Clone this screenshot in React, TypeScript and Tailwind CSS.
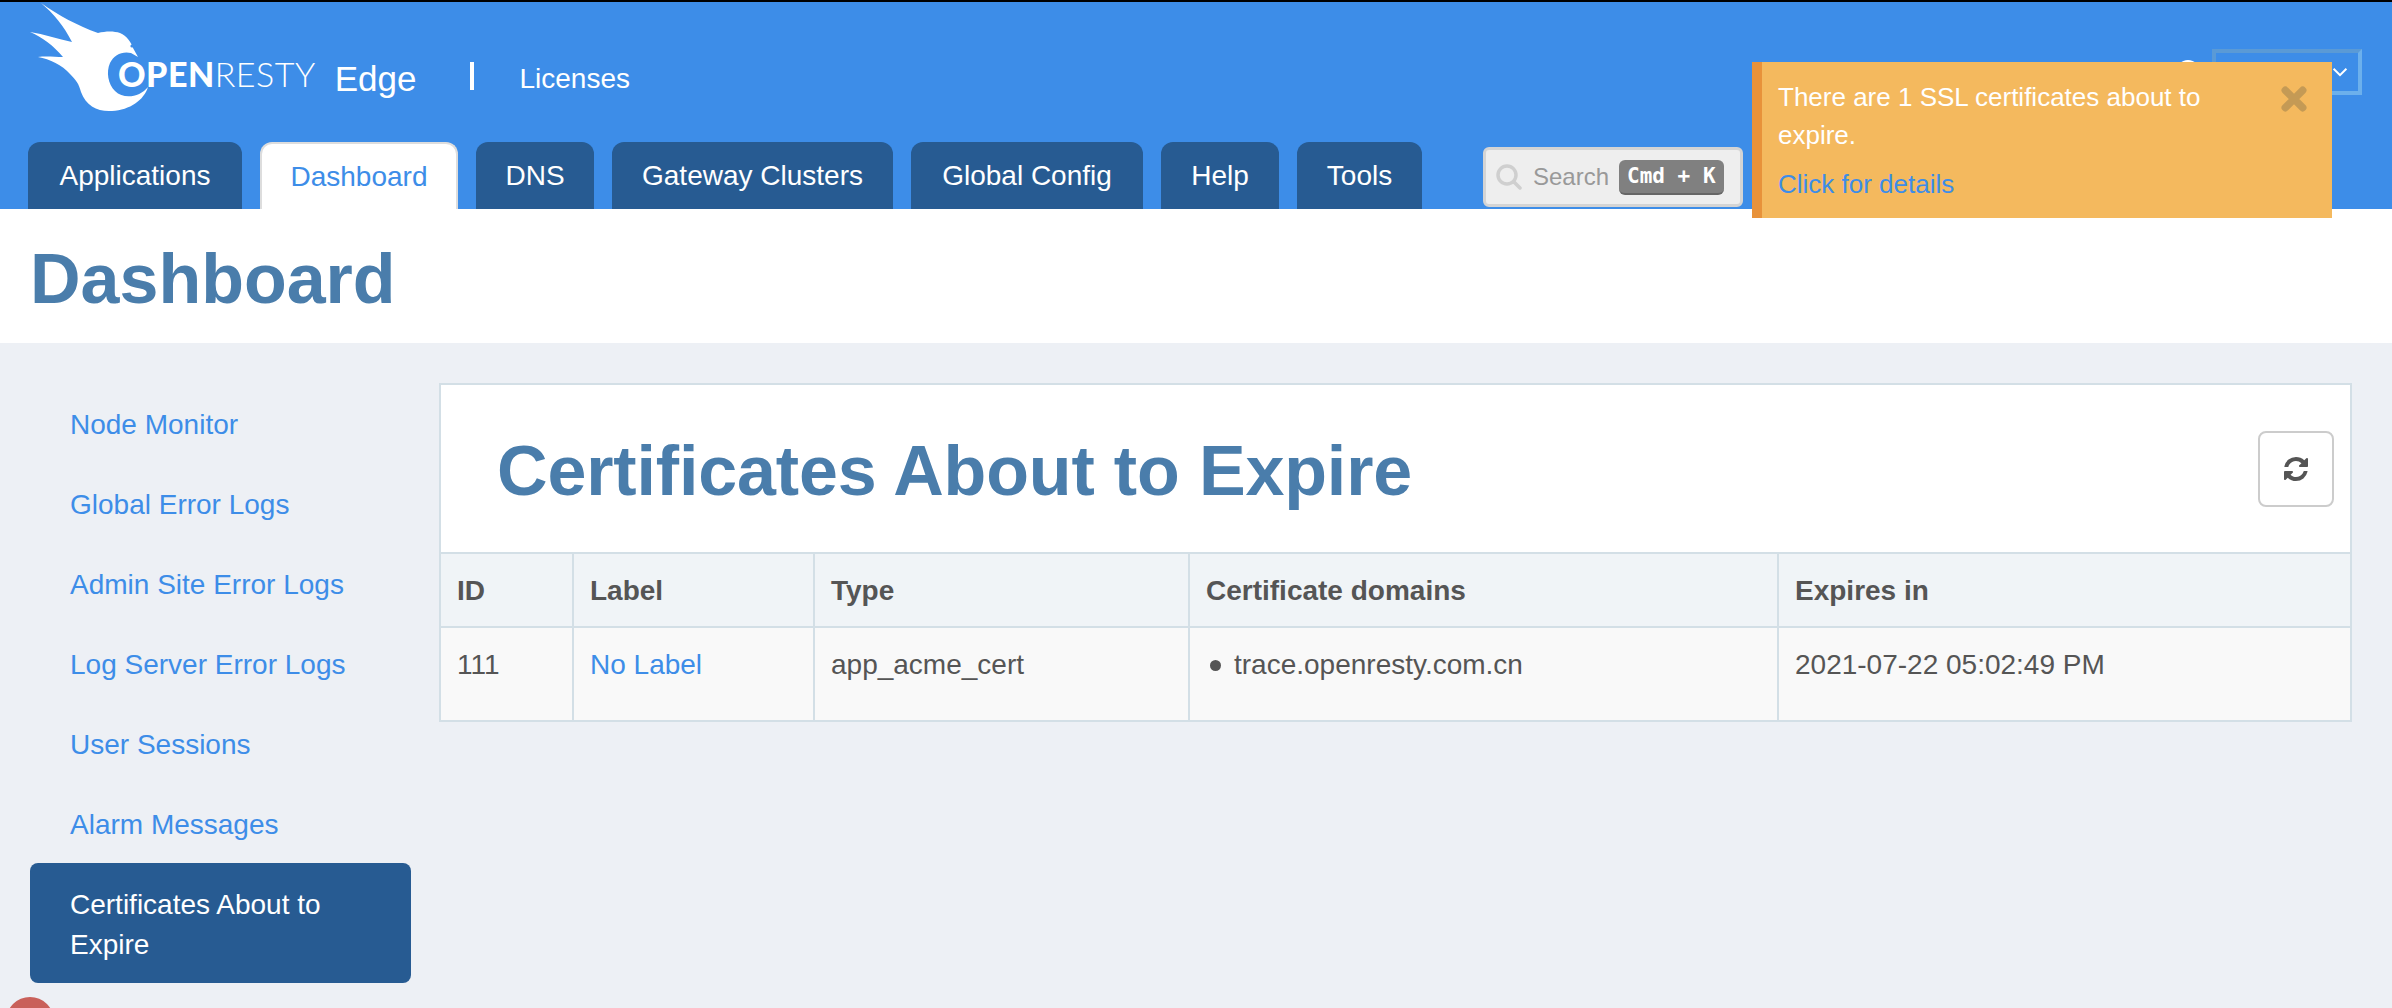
import React from 'react';

const tabs = [
  { label: 'Applications', width: 'w-[214px]' },
  { label: 'Dashboard', width: 'w-[198px]', active: true },
  { label: 'DNS', width: 'w-[118px]' },
  { label: 'Gateway Clusters', width: 'w-[281px]' },
  { label: 'Global Config', width: 'w-[232px]' },
  { label: 'Help', width: 'w-[118px]' },
  { label: 'Tools', width: 'w-[125px]' },
];

const sideLinks = [
  'Node Monitor',
  'Global Error Logs',
  'Admin Site Error Logs',
  'Log Server Error Logs',
  'User Sessions',
  'Alarm Messages',
];

function Bird() {
  return (
    <svg viewBox="0 0 160 115" className="absolute left-0 top-[-2px] w-[160px] h-[115px]">
      <path
        fill="#fff"
        d="M41 3 C58 15 78 26 98 33 C106 31 114 31 120 33 C127 36 131 42 133 48 L138 57 L131 53 C122 51 114 55 110 63 C106 72 108 84 115 91 C124 100 140 97 148 87 C144 100 130 110 112 111 C98 112 86 106 81 92 C79 84 76 80 70 74 C62 65 50 59 38 57 C46 56 55 57 63 57 C54 46 42 37 30 32 C44 34 58 39 72 42 C64 26 53 13 41 3 Z"
      />
      <circle cx="132" cy="46" r="1.6" fill="#3d8de8" />
    </svg>
  );
}

export default function App() {
  return (
    <div className="h-[1008px] overflow-hidden relative bg-[#edf0f5] text-[28px] leading-[40px] text-[#555555]" style={{ fontFamily: '"Liberation Sans", Arial, sans-serif' }}>
      {/* Top header */}
      <header className="h-[209px] bg-[#3d8de8] border-t-2 border-black relative">
        <div className="h-[140px] flex items-start relative">
          <Bird />
          <div className="ml-[118px] mt-[52px] flex items-center h-[40px] text-white text-[34px] tracking-[0.5px]" style={{ fontFamily: 'Lato, sans-serif' }}>
            <span className="font-black">OPEN</span>
            <span className="font-light">RESTY</span>
          </div>
          <span className="ml-[19px] mt-[55px] text-[35px] leading-[44px] text-white">Edge</span>
          <span className="ml-[54px] mt-[60px] w-[4px] h-[28px] bg-white" />
          <span className="ml-[45px] mt-[57px] text-white">Licenses</span>
          <div className="ml-auto mr-[30px] mt-[47px] flex items-center gap-[12px]">
            <span className="w-[24px] h-[24px] rounded-full bg-white" />
            <div className="w-[150px] h-[46px] border-4 border-t-[#5a9ad6] border-l-[#5a9ad6] border-r-[#6cb0ec] border-b-[#6cb0ec] flex items-center justify-end pr-[10px]">
              <svg viewBox="0 0 20 12" className="w-[16px] h-[10px]" fill="none" stroke="#fff" strokeWidth="2.5">
                <path d="M2 2l8 8 8-8" />
              </svg>
            </div>
          </div>
        </div>
        <nav className="flex items-end gap-[18px] pl-[28px] h-[67px]">
          {tabs.map((tab) =>
            tab.active ? (
              <div key={tab.label} className={`${tab.width} h-[67px] flex items-center justify-center rounded-t-[12px] bg-white border-2 border-b-0 border-[#dddddd] text-[#3d8de8]`}>
                {tab.label}
              </div>
            ) : (
              <div key={tab.label} className={`${tab.width} h-[67px] flex items-center justify-center rounded-t-[12px] bg-[#275b92] text-white`}>
                {tab.label}
              </div>
            )
          )}
          <div className="ml-[43px] mb-[2px] w-[260px] h-[60px] rounded-[6px] bg-[#eeeeee] border-[3px] border-[#d4d4d4] flex items-center pl-[10px] text-[24px] text-[#999999]">
            <svg viewBox="0 0 26 26" className="w-[26px] h-[26px] mr-[11px] shrink-0" fill="none" stroke="#cfcfcf" strokeWidth="3.5" strokeLinecap="round">
              <circle cx="11" cy="11" r="9" />
              <path d="M18 18l6 6" />
            </svg>
            <span>Search</span>
            <span className="ml-[10px] h-[35px] px-[8px] rounded-[6px] bg-[#808080] border-b-2 border-[#666666] text-white text-[21px] font-bold flex items-center whitespace-pre" style={{ fontFamily: '"DejaVu Sans Mono", monospace' }}>Cmd + K</span>
          </div>
        </nav>
      </header>

      {/* Page title */}
      <div className="h-[134px] bg-white flex items-center pl-[30px] pt-[5px]">
        <h1 className="text-[70px] leading-[90px] font-bold text-[#4a7dab]">Dashboard</h1>
      </div>

      {/* Body */}
      <main className="flex items-start">
        <aside className="w-[381px] ml-[30px] mt-[40px] shrink-0">
          {sideLinks.map((link) => (
            <div key={link} className="px-[40px] pt-[22px] pb-[18px] text-[#3d8de8]">{link}</div>
          ))}
          <div className="px-[40px] pt-[22px] pb-[18px] rounded-[8px] bg-[#275b92] text-white">Certificates About to Expire</div>
        </aside>

        <section className="ml-[28px] mt-[40px] w-[1913px] border-2 border-[#d3dfe6] bg-white">
          <div className="h-[169px] flex items-center justify-between pl-[56px] pr-[16px] border-b-2 border-[#d3dfe6]">
            <h2 className="text-[70px] leading-[90px] pt-[5px] font-bold tracking-[-0.15px] text-[#4a7dab]">Certificates About to Expire</h2>
            <button className="w-[76px] h-[76px] rounded-[8px] border-2 border-[#cccccc] bg-white flex items-center justify-center">
              <svg viewBox="0 0 1792 1792" className="w-[28px] h-[28px]" fill="#555555">
                <path d="M1639 1056q0 5-1 7-64 268-268 434.5t-478 166.5q-146 0-282.5-55t-243.5-157l-129 129q-19 19-45 19t-45-19-19-45v-448q0-26 19-45t45-19h448q26 0 45 19t19 45-19 45l-137 137q71 66 161 102t187 36q134 0 250-65t186-179q11-17 53-117 8-23 30-23h192q13 0 22.5 9.5t9.5 22.5zm25-800v448q0 26-19 45t-45 19h-448q-26 0-45-19t-19-45 19-45l138-138q-148-137-349-137-134 0-250 65t-186 179q-11 17-53 117-8 23-30 23h-199q-13 0-22.5-9.5t-9.5-22.5v-7q65-268 270-434.5t480-166.5q146 0 284 55.5t245 156.5l130-129q19-19 45-19t45 19 19 45z" />
              </svg>
            </button>
          </div>
          <div className="grid grid-cols-[133px_241px_375px_589px_1fr]">
            {['ID', 'Label', 'Type', 'Certificate domains', 'Expires in'].map((h, i) => (
              <div key={h} className={`h-[74px] px-[16px] pt-[17px] bg-[#f0f4f7] font-bold border-b-2 border-[#d3dfe6] ${i < 4 ? 'border-r-2' : ''}`}>{h}</div>
            ))}
            <div className="h-[92px] px-[16px] pt-[17px] bg-[#f9f9f9] border-r-2 border-[#d3dfe6]">111</div>
            <div className="h-[92px] px-[16px] pt-[17px] bg-[#f9f9f9] border-r-2 border-[#d3dfe6] text-[#3d8de8]">No Label</div>
            <div className="h-[92px] px-[16px] pt-[17px] bg-[#f9f9f9] border-r-2 border-[#d3dfe6]">app_acme_cert</div>
            <div className="h-[92px] px-[16px] pt-[17px] bg-[#f9f9f9] border-r-2 border-[#d3dfe6]">
              <div className="flex items-center gap-[13px] pl-[4px]">
                <span className="w-[11px] h-[11px] rounded-full bg-[#555555]" />
                <span>trace.openresty.com.cn</span>
              </div>
            </div>
            <div className="h-[92px] px-[16px] pt-[17px] bg-[#f9f9f9]">2021-07-22 05:02:49 PM</div>
          </div>
        </section>
      </main>

      {/* Alert toast */}
      <div className="absolute left-[1752px] top-[62px] w-[580px] h-[156px] bg-[#f4b95e] border-l-[10px] border-[#e8923a] pl-[16px] pr-[24px] pt-[16px] text-[26px] text-white leading-[38px]">
        <div className="w-[480px]">There are 1 SSL certificates about to expire.</div>
        <div className="mt-[11px] text-[#3d8de8]">Click for details</div>
        <svg viewBox="0 0 24 24" className="absolute right-[25px] top-[24px] w-[26px] h-[26px]" fill="none" stroke="#c49a55" strokeWidth="7" strokeLinecap="round">
          <path d="M4 4l16 16M20 4L4 20" />
        </svg>
      </div>

      {/* Floating red button, cut off by the window */}
      <div className="absolute left-[6px] top-[997px] w-[48px] h-[48px] rounded-full bg-[#c9605a]" />
    </div>
  );
}
